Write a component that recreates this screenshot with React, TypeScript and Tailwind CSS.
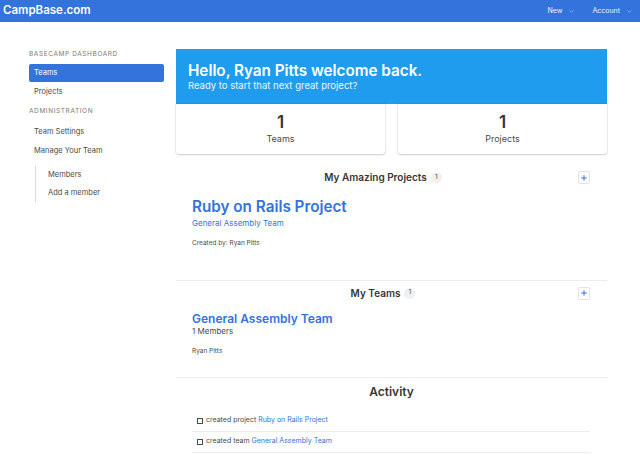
import { ChevronDown, Plus } from 'lucide-react';

function SectionHeading({ title, count }: { title: string; count: number }) {
  return (
    <div className="grid grid-cols-[1fr_auto_1fr] items-center pr-[17px]">
      <div />
      <div className="flex items-center gap-[4px]">
        <span className="text-[10px] font-semibold text-[#363636]">{title}</span>
        <span className="flex h-[11px] w-[11px] items-center justify-center rounded-full bg-[#f0f0f0] text-[6.5px] text-[#4a4a4a]">
          {count}
        </span>
      </div>
      <div className="flex justify-end">
        <button className="flex h-[13px] w-[12px] items-center justify-center rounded-[2px] border border-[#e4e4e4] bg-white text-[#3273dc]">
          <Plus size={8} strokeWidth={3} />
        </button>
      </div>
    </div>
  );
}

export default function App() {
  return (
    <div className="h-[456px] w-[640px] overflow-hidden bg-white font-['Inter','Noto_Sans',sans-serif] text-[#4a4a4a]">
      {/* Navbar */}
      <nav className="flex h-[22px] items-center justify-between bg-[#3273dc] pl-[3px] pr-[7px] text-white">
        <span className="text-[11.5px] font-semibold">CampBase.com</span>
        <div className="flex items-center gap-[17px] text-[7px] text-white/90">
          <span className="flex items-center gap-[6px]">
            New <ChevronDown size={7} strokeWidth={1.5} />
          </span>
          <span className="flex items-center gap-[6px]">
            Account <ChevronDown size={7} strokeWidth={1.5} />
          </span>
        </div>
      </nav>

      <div className="flex">
        {/* Sidebar */}
        <aside className="w-[164px] shrink-0 pl-[29px] pt-[28px]">
          <p className="text-[6.5px] uppercase tracking-[0.6px] text-[#7a7a7a]">Basecamp Dashboard</p>
          <ul className="mt-[4px] text-[7.5px] text-[#4a4a4a]">
            <li className="flex h-[18px] items-center rounded-[2px] bg-[#3273dc] pl-[5px] text-white">Teams</li>
            <li className="flex h-[19px] items-center pl-[5px]">Projects</li>
          </ul>
          <p className="mt-[6px] text-[6.5px] uppercase tracking-[0.6px] text-[#7a7a7a]">Administration</p>
          <ul className="mt-[6px] text-[7.5px] text-[#4a4a4a]">
            <li className="flex h-[19px] items-center pl-[5px]">Team Settings</li>
            <li className="flex h-[19px] items-center pl-[5px]">Manage Your Team</li>
            <li className="ml-[6px] mt-[5px] border-l border-[#dbdbdb] pl-[12px]">
              <div className="flex h-[18px] items-center">Members</div>
              <div className="flex h-[18px] items-center">Add a member</div>
            </li>
          </ul>
        </aside>

        {/* Main */}
        <main className="ml-[12px] w-[431px] pt-[27px]">
          <section className="flex h-[55px] flex-col justify-center bg-[#209cee] px-[12px] text-white">
            <h1 className="text-[15.25px] font-semibold leading-[18px]">Hello, Ryan Pitts welcome back.</h1>
            <p className="text-[9.5px] leading-[12px] text-white/90">Ready to start that next great project?</p>
          </section>

          <div className="grid grid-cols-2 gap-[13px]">
            <div className="flex h-[50px] flex-col items-center justify-center rounded-b-[3px] bg-white shadow-[0_1px_2px_rgba(10,10,10,0.15),0_0_0_1px_rgba(10,10,10,0.05)]">
              <span className="text-[17px] font-semibold leading-[20px] text-[#363636]">1</span>
              <span className="text-[9px] leading-[14px] text-[#4a4a4a]">Teams</span>
            </div>
            <div className="flex h-[50px] flex-col items-center justify-center rounded-b-[3px] bg-white shadow-[0_1px_2px_rgba(10,10,10,0.15),0_0_0_1px_rgba(10,10,10,0.05)]">
              <span className="text-[17px] font-semibold leading-[20px] text-[#363636]">1</span>
              <span className="text-[9px] leading-[14px] text-[#4a4a4a]">Projects</span>
            </div>
          </div>

          {/* Projects */}
          <section className="border-b border-[#ededed] pb-[31px] pt-[16px]">
            <SectionHeading title="My Amazing Projects" count={1} />
            <div className="px-[16px] pt-[12px]">
              <h2 className="text-[15.25px] font-semibold leading-[20px] text-[#3273dc]">Ruby on Rails Project</h2>
              <p className="text-[8px] leading-[13px] text-[#3273dc]">General Assembly Team</p>
              <p className="mt-[9px] text-[6.5px] text-[#4a4a4a]">Created by: Ryan Pitts</p>
            </div>
          </section>

          {/* Teams */}
          <section className="border-b border-[#ededed] pb-[20px] pt-[5px]">
            <SectionHeading title="My Teams" count={1} />
            <div className="px-[16px] pt-[10px]">
              <h2 className="text-[12px] font-semibold leading-[15px] text-[#3273dc]">General Assembly Team</h2>
              <p className="text-[8px] leading-[11px] text-[#4a4a4a]">1 Members</p>
              <p className="mt-[10px] text-[6.5px] text-[#4a4a4a]">Ryan Pitts</p>
            </div>
          </section>

          {/* Activity */}
          <section className="pt-[6px]">
            <h3 className="text-center text-[12px] font-semibold leading-[16px] text-[#363636]">Activity</h3>
            <ul className="mt-[11px] pl-[16px] pr-[17px] text-[7px]">
              <li className="flex h-[21px] items-center gap-[3px] border-b border-[#ededed] pl-[5px]">
                <span className="h-[6px] w-[6px] border border-[#4a4a4a]" />
                <span>
                  created project <span className="text-[#3273dc]">Ruby on Rails Project</span>
                </span>
              </li>
              <li className="flex h-[21px] items-center gap-[3px] border-b border-[#ededed] pl-[5px]">
                <span className="h-[6px] w-[6px] border border-[#4a4a4a]" />
                <span>
                  created team <span className="text-[#3273dc]">General Assembly Team</span>
                </span>
              </li>
            </ul>
          </section>
        </main>
      </div>
    </div>
  );
}
